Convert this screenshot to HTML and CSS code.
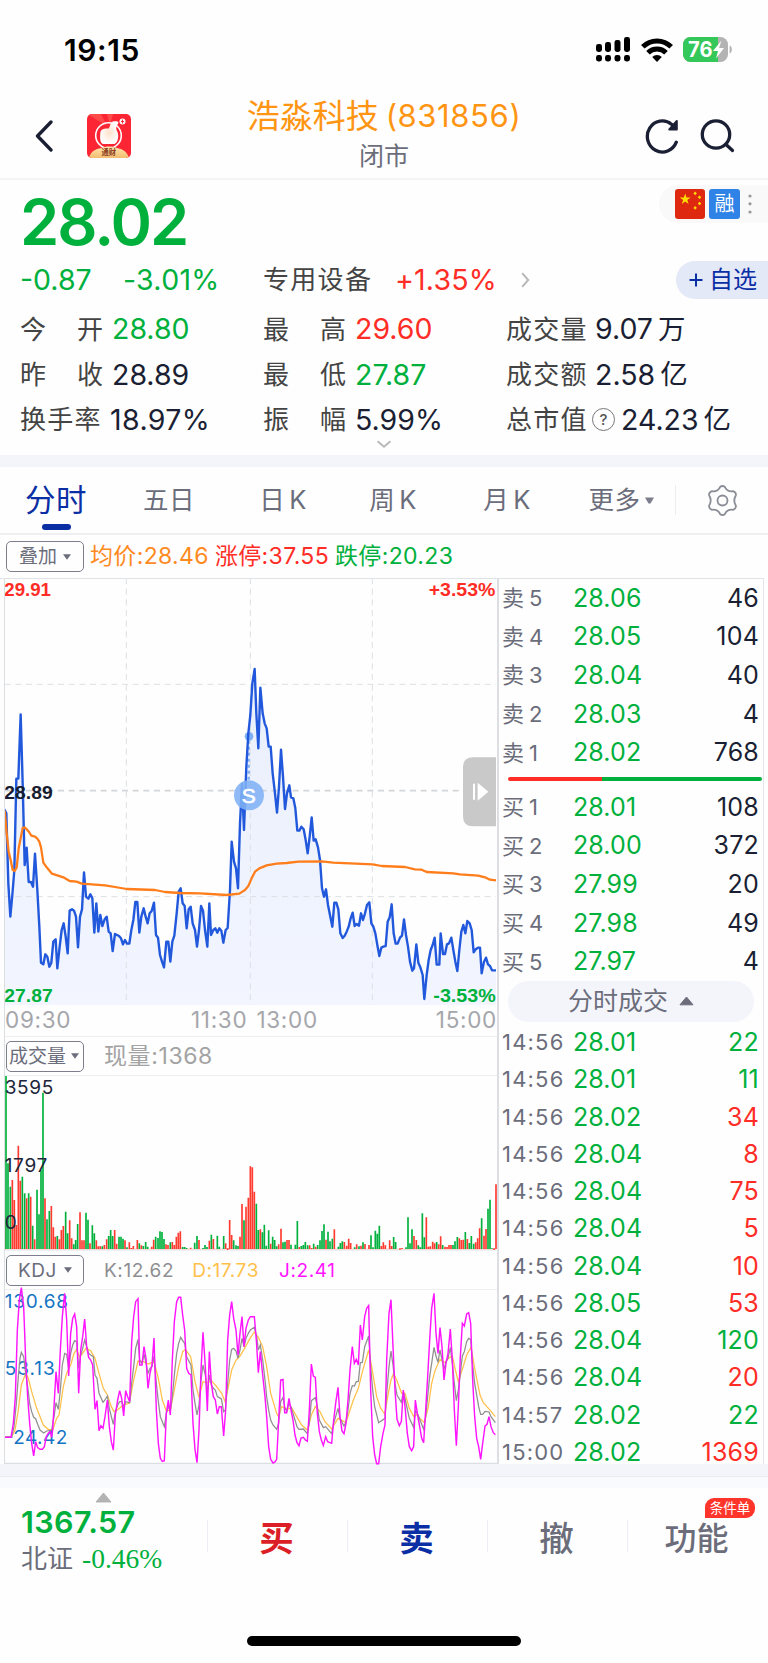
FILE: index.html
```html
<!DOCTYPE html>
<html lang="zh-CN">
<head>
<meta charset="utf-8">
<title>浩淼科技 (831856)</title>
<link rel="stylesheet" href="styles.css">
</head>
<body>
<div class="status">
  <span class="clock">19:15</span>
  <div class="status-icons">
    <svg width="34" height="25" viewBox="0 0 34 25"><g fill="#000"><rect x="0" y="7" width="6" height="8" rx="2.4"/><rect x="9" y="5" width="6" height="10" rx="2.4"/><rect x="18.500" y="3" width="6" height="12" rx="2.4"/><rect x="28" y="0" width="6" height="15" rx="2.4"/><rect x="0" y="18" width="6" height="6.500" rx="2.4"/><rect x="9" y="18" width="6" height="6.500" rx="2.4"/><rect x="18.500" y="18" width="6" height="6.500" rx="2.4"/><rect x="28" y="18" width="6" height="6.500" rx="2.4"/></g></svg>
    <svg class="wifi" width="32" height="24" viewBox="0 0 32 24"><g fill="none" stroke="#000" stroke-width="5"><path d="M1.800 8.800a20 20 0 0 1 28.400 0"/><path d="M7 14.800a12.700 12.700 0 0 1 18 0"/></g><path d="M16 24l-4.800-5a6.800 6.800 0 0 1 9.600 0z" fill="#000"/></svg>
    <svg width="50" height="26" viewBox="0 0 50 26"><defs><clipPath id="batt"><rect width="45" height="25" rx="7.500"/></clipPath></defs><g clip-path="url(#batt)"><rect width="45" height="25" fill="#b3b3b3"/><rect width="35" height="25" fill="#34c759"/></g><path d="M46.600 8.600c3 .8 3 7.200 0 8z" fill="#b3b3b3"/><text class="batt-text" x="5" y="20.200" textLength="24.500" lengthAdjust="spacingAndGlyphs">76</text><path d="M38.500 3.500l-8.500 10.500h5L33 21.500l8-10.500h-5z" fill="#fff"/></svg>
  </div>
</div>

<header class="header">
  <div class="head-left">
    <svg width="18" height="32" viewBox="0 0 18 32"><path d="M16 2L2.500 16 16 30" fill="none" stroke="#1a1f33" stroke-width="3.300" stroke-linecap="round" stroke-linejoin="round"/></svg>
    <svg class="app-icon" width="44" height="44" viewBox="0 0 44 44">
      <defs><clipPath id="app"><rect width="44" height="44" rx="5"/></clipPath><linearGradient id="gold" x2="0" y2="1"><stop stop-color="#ffe4ad"/><stop offset="1" stop-color="#f2bd70"/></linearGradient><radialGradient id="palm"><stop stop-color="#ffe2cc"/><stop offset="1" stop-color="#fff"/></radialGradient></defs>
      <g clip-path="url(#app)"><rect width="44" height="44" fill="#fb2534"/><path d="M0 0h14l6 12zM20 0h6l-3 12z" fill="#ff4a4a"/>
      <circle cx="21.500" cy="21.500" r="12.800" fill="none" stroke="#fff" stroke-width="1.600"/><path d="M13.500 17.500c1-2.500 4-3 8-3 2-1.500 1.500-6.500 5-7.200 5-.5 6 1 4 3.200-1.500 2-1.500 4-.8 6 2.500 3 2 12-2.200 13.500H16c-3.500-1-3-8-2.500-12.500z" fill="url(#palm)"/><circle cx="35.500" cy="7.500" r="3" fill="#fff"/><path d="M35.500 5.500v4m-1.500-2h3" stroke="#fb2534"/>
      <path d="M2 44c2-8 8-9 12-10 5-2 11-2 16 0 5 1 10 3 12 10z" fill="url(#gold)"/><text class="app-text" x="14.500" y="41" textLength="14.500" lengthAdjust="spacingAndGlyphs">通财</text></g>
    </svg>
  </div>
  <div class="titles">
    <div class="title"><span>浩淼科技</span><span class="code">(831856)</span></div>
    <div class="subtitle">闭市</div>
  </div>
  <div class="head-right">
    <svg width="36" height="36" viewBox="0 0 36 36"><g fill="none" stroke="#1a1f33" stroke-width="3.300" stroke-linecap="round" stroke-linejoin="round"><path d="M32.300 24.200A15 15.500 0 1 1 27.500 6.200l3.500 3.300"/><path d="M32.800 3v8.500h-7.500z" fill="#1a1f33" stroke-width="2"/></g></svg>
    <svg width="36" height="36" viewBox="0 0 36 36"><g fill="none" stroke="#1a1f33" stroke-width="3.300" stroke-linecap="round"><circle cx="17" cy="16.500" r="13.700"/><path d="M27 26.500l6.500 6"/></g></svg>
  </div>
</header>

<section class="quote">
  <div class="quote-top">
    <div class="last">28.02</div>
    <div class="tags">
      <svg width="30" height="30" viewBox="0 0 30 30"><rect width="30" height="30" rx="3" fill="#de2910"/><path d="M10.200 4.500l1.300 4h4.200l-3.400 2.400 1.300 4-3.400-2.500-3.400 2.500 1.300-4-3.400-2.400h4.200z" fill="#ffde00"/><g fill="#ffde00"><path d="M20 2.500l1.800 1.800-1.600 2-1.700-1.700z"/><path d="M24.300 6.500l2 1.500-1.500 2-2-1.500z"/><path d="M24.300 12.800l2 1.500-1.500 2-2-1.500z"/><path d="M20 17l1.800 1.800-1.600 2-1.700-1.700z"/></g></svg>
      <span class="tag-rong">融</span>
      <svg width="4" height="20" viewBox="0 0 4 20"><g fill="#999"><circle cx="2" cy="2" r="1.600"/><circle cx="2" cy="9.800" r="1.600"/><circle cx="2" cy="18" r="1.600"/></g></svg>
    </div>
  </div>
  <div class="quote-change">
    <span class="num down chg">-0.87</span><span class="num down pct">-3.01%</span>
    <span class="lab sector">专用设备</span><span class="num up sector-pct">+1.35%</span>
    <svg width="9" height="16" viewBox="0 0 9 16"><path d="M1.200 1.200L7.200 8l-6 6.800" fill="none" stroke="#b9b9b9" stroke-width="2"/></svg>
    <span class="fav"><svg width="14" height="14" viewBox="0 0 14 14"><path d="M7 .5v13M.5 7h13" stroke="#0a2ea4" stroke-width="2"/></svg>自选</span>
  </div>
  <div class="stats">
    <div><span class="lab just">今 开</span><span class="num down">28.80</span></div>
    <div><span class="lab just">最 高</span><span class="num up">29.60</span></div>
    <div><span class="lab three">成交量</span><span class="num">9.07</span><span class="unit">万</span></div>
    <div><span class="lab just">昨 收</span><span class="num">28.89</span></div>
    <div><span class="lab just">最 低</span><span class="num down">27.87</span></div>
    <div><span class="lab three">成交额</span><span class="num">2.58</span><span class="unit">亿</span></div>
    <div><span class="lab three">换手率</span><span class="num wide">18.97%</span></div>
    <div><span class="lab just">振 幅</span><span class="num">5.99%</span></div>
    <div><span class="lab three cap">总市值</span><span class="help">?</span><span class="num">24.23</span><span class="unit">亿</span></div>
  </div>
  <svg class="expand" width="16" height="9" viewBox="0 0 16 9"><path d="M1.500 1.200L8 6.800l6.500-5.600" fill="none" stroke="#b9b9b9" stroke-width="2"/></svg>
</section>
<div class="band"></div>

<nav class="tabs">
  <span class="tab active">分时</span><span class="tab">五日</span><span class="tab">日<i>K</i></span><span class="tab">周<i>K</i></span><span class="tab">月<i>K</i></span><span class="tab more">更多<svg width="9" height="7" viewBox="0 0 9 7"><path d="M0 .5h9L5.500 6.500h-2z" fill="#7c7e8c"/></svg></span>
  <span class="gear"><svg width="31" height="31" viewBox="0 0 31 31"><g fill="none" stroke="#8a8c96" stroke-width="1.800" stroke-linejoin="round"><path d="M13.200 1.800Q15.500 .2 17.800 1.800Q20.200 7 26 6.200Q29.200 7.200 28.900 10.200Q25.700 15.500 28.900 20.800Q29.200 23.800 26 24.800Q20.200 24 17.800 29.200Q15.500 30.800 13.200 29.200Q10.800 24 5 24.800Q1.800 23.800 2.100 20.800Q5.300 15.500 2.100 10.200Q1.800 7.200 5 6.200Q10.800 7 13.200 1.800z"/><circle cx="15.500" cy="15.500" r="5"/></g></svg></span>
</nav>

<div class="legend">
  <span class="pick">叠加<svg width="8" height="6" viewBox="0 0 8 6"><path d="M0 .3h8L4 5.700z" fill="#6b6d7b"/></svg></span>
  <span class="avg">均价:28.46</span><span class="limit-up">涨停:37.55</span><span class="limit-down">跌停:20.23</span>
</div>

<main class="board">
  <div class="charts">
    <svg class="price" width="493" height="426" viewBox="15 27 1479 1278">
      <defs>
        <linearGradient id="area" x2="0" y2="1"><stop stop-color="#e9effc"/><stop offset="1" stop-color="#f3f6ff"/></linearGradient>
        <clipPath id="plot"><rect x="13" y="24" width="1475" height="1281"/></clipPath>
        <path id="series" d="M0 1400V720L14 720 19 730 25 940 31 1040 37 975 43 900 49 626 55 626 62 433 68 640 74 885 80 833 86 936 93 936 99 950 105 851 112 960 118 1070 123 1178 130 1183 136 1153 142 1160 148 1190 154 1178 160 1115 167 1108 172 1195 179 1130 185 1080 191 1060 197 1100 203 1150 209 1022 216 1018 222 1022 228 1040 234 1132 240 1040 246 1018 252 907 258 980 265 986 271 973 277 985 283 1088 289 1000 295 1085 301 1035 307 1068 314 1048 320 1040 326 1085 332 1090 338 1143 345 1092 357 1098 363 1105 369 1123 375 1110 381 1121 388 1121 394 1080 400 1050 406 996 412 996 418 1088 424 1040 431 1015 437 1040 443 1060 449 1030 455 1023 462 998 468 1095 474 1103 480 1155 486 1175 492 1192 499 1115 505 1115 511 1175 517 1115 523 1097 530 1030 536 965 542 955 548 1000 554 1008 560 1075 566 1018 572 1010 578 1060 585 1080 591 1130 597 1080 603 1008 609 1022 615 1080 622 1130 628 1000 633 1095 640 1080 646 1075 652 1088 658 1075 664 1082 670 1118 677 1080 683 1074 690 960 695 815 702 875 708 895 714 955 720 760 726 642 732 780 739 590 745 490 751 435 757 340 764 297 769 430 775 535 781 353 788 430 794 460 800 475 806 530 812 530 818 610 825 670 831 728 837 650 843 539 849 620 855 717 861 670 868 646 873 682 880 685 886 715 892 782 898 782 904 770 911 778 917 810 923 850 929 800 935 742 941 812 947 808 954 832 960 870 966 955 972 980 978 958 984 1005 991 1040 997 1070 1003 998 1009 998 1015 1018 1021 1090 1028 1104 1034 1097 1040 1085 1046 1070 1052 1045 1058 1028 1064 1068 1070 1062 1077 1067 1083 1030 1089 1050 1095 1030 1101 1005 1108 997 1114 1060 1120 1070 1126 1090 1132 1125 1138 1158 1144 1133 1150 1130 1157 1128 1163 1055 1169 1042 1175 1003 1181 1090 1187 1121 1193 1121 1200 1103 1206 1097 1212 1048 1218 1095 1224 1130 1230 1175 1237 1202 1242 1195 1249 1123 1255 1178 1261 1192 1268 1215 1273 1287 1280 1215 1286 1170 1292 1140 1298 1125 1304 1103 1310 1184 1318 1184 1322 1090 1329 1152 1335 1152 1341 1123 1347 1120 1354 1103 1360 1140 1366 1175 1372 1203 1378 1140 1384 1085 1390 1065 1396 1090 1402 1053 1409 1060 1415 1080 1421 1147 1427 1138 1434 1133 1440 1133 1445 1210 1452 1175 1458 1163 1464 1183 1470 1188 1476 1201 1488 1201H1510V1400z"/>
      </defs>
      <use href="#series" fill="url(#area)" clip-path="url(#plot)"/>
      <g stroke="#dcdfe2" stroke-width="3" stroke-dasharray="18 14" fill="none"><path d="M379 24V1305M751 24V1305M1117 24V1305"/><path d="M14 343H1488M14 980H1488"/><path d="M14 662H1488" stroke="#d2d5da" stroke-width="5"/></g>
      <g fill="#7fb0f5"><circle cx="747" cy="499" r="13"/><path d="M746 512V632" stroke="#7fb0f5" stroke-width="7" stroke-dasharray="9 9"/></g>
      <use class="price-line" href="#series" clip-path="url(#plot)"/>
      <path class="avg-line" d="M14 722L20 790 26 845 32 870 38 900 44 903 50 892 56 835 62 805 68 774 74 772 80 778 87 786 94 797 105 800 112 806 118 815 123 832 130 878 140 892 156 911 190 922 209 933 230 935 245 941 315 946 345 951 380 957 465 960 495 966 540 969 600 970 680 975 718 971 735 960 745 948 755 925 765 905 778 895 800 886 830 881 860 879 895 875 965 874 1000 878 1050 880 1118 883 1145 888 1215 891 1245 898 1265 899 1280 906 1360 910 1380 913 1435 917 1455 922 1470 929 1488 931"/>
      <circle cx="747" cy="676" r="45" fill="#7fb0f5" fill-opacity=".88"/>
      <text class="mark" x="725" y="698" textLength="42" lengthAdjust="spacingAndGlyphs">S</text>
      <g class="axis-bold"><text x="13" y="79" fill="#ff2d26" textLength="140" lengthAdjust="spacingAndGlyphs">29.91</text><text x="1286" y="79" fill="#ff2d26" textLength="200" lengthAdjust="spacingAndGlyphs">+3.53%</text><text x="13" y="688" fill="#171c30" textLength="145" lengthAdjust="spacingAndGlyphs">28.89</text><text x="13" y="1296" fill="#00b03c" textLength="145" lengthAdjust="spacingAndGlyphs">27.87</text><text x="1300" y="1296" fill="#00b03c" textLength="187" lengthAdjust="spacingAndGlyphs">-3.53%</text></g>
      <path d="M1488 562H1419q-30 0-30 30V739q0 30 30 30H1488z" fill="#c9c9c9"/><path d="M1419 641h6v48h-6zM1433 638l32 27-32 27z" fill="#fff"/>
    </svg>
    <div class="times"><span>09:30</span><span class="mid">11:30</span><span class="mid2">13:00</span><span>15:00</span></div>
    <div class="bar vol-bar"><span class="pick">成交量<svg width="8" height="6" viewBox="0 0 8 6"><path d="M0 .3h8L4 5.700z" fill="#6b6d7b"/></svg></span><span class="now">现量:1368</span></div>
    <svg class="volume" width="493" height="174" viewBox="15 138 1479 522">
      <path d="M12 657.500H1488" stroke="#f7c9c7" stroke-width="3"/>
      <path class="vol-up" d="M14 657V555M37 657V450M43 657V510M49 657V585M55 657V347M61 657V452M80 657V505M92 657V500M104 657V628M135 657V505M154 657V528M160 657V592M166 657V620M178 657V628M184 657V600M190 657V588M209 657V571M215 657V625M240 657V547M246 657V631M252 657V631M270 657V640M289 657V631M295 657V649M301 657V649M313 657V645M320 657V628M344 657V600M350 657V641M375 657V631M388 657V637M394 657V654M400 657V648M412 657V630M424 657V646M455 657V650M461 657V629M498 657V643M504 657V645M517 657V636M523 657V645M529 657V620M535 657V608M541 657V604M572 657V653M597 657V630M628 657V632M640 657V627M677 657V640M683 660V655M689 657V570M695 657V615M720 657V620M726 657V522M738 657V530M745 657V503M751 657V409M757 657V412M763 657V485M781 657V598M812 657V641M836 657V643M843 657V596M861 657V630M867 657V630M898 657V651M929 657V646M935 657V654M947 657V650M978 657V629M1003 657V598M1033 657V636M1040 657V647M1046 657V626M1052 657V639M1070 657V643M1083 657V647M1095 657V642M1107 657V645M1144 657V648M1150 657V637M1156 657V646M1169 657V631M1175 657V648M1200 659V655M1206 657V654M1242 657V618M1249 657V630M1279 657V562M1285 657V650M1291 657V649M1298 657V635M1304 657V640M1316 657V643M1322 657V619M1335 657V650M1341 657V651M1347 657V645M1353 657V645M1378 657V625M1384 657V630M1390 657V629M1402 657V627M1427 657V637M1433 657V625M1439 657V595M1452 657V617M1458 657V597M1482 660V655M1488 657V463"/>
      <path class="vol-down" d="M18 657V138M24 657V400M31 657V470M67 657V440M74 657V490M86 657V490M98 657V587M111 657V479M117 657V553M123 657V420M129 657V188M141 657V568M148 657V543M172 657V618M197 657V545M203 657V610M221 657V643M227 657V630M233 657V582M258 657V548M264 657V569M277 657V586M283 657V610M307 657V649M326 657V618M332 657V600M338 657V618M357 657V620M363 657V620M369 657V626M381 657V652M418 657V640M430 657V648M437 657V636M443 657V650M467 657V620M474 657V624M480 657V604M486 657V606M492 657V627M511 657V637M548 657V651M554 657V651M560 657V654M584 657V638M591 657V618M609 657V654M615 657V645M621 657V651M634 657V614M652 657V617M658 657V650M671 657V618M701 657V631M708 657V646M714 657V648M732 657V571M769 657V521M775 657V600M787 657V607M793 657V584M799 657V647M806 657V601M818 657V620M824 657V630M830 657V649M849 657V637M855 657V635M873 657V644M886 657V644M892 657V573M904 657V648M910 657V645M916 657V636M923 657V646M941 657V641M953 657V645M960 657V631M966 657V603M972 657V583M984 657V605M990 657V634M997 657V626M1015 657V650M1021 657V639M1027 657V634M1064 657V652M1077 657V649M1089 657V637M1113 657V616M1119 657V652M1126 657V602M1132 657V611M1138 657V587M1181 657V621M1187 657V636M1218 657V652M1224 657V562M1230 657V640M1236 657V598M1255 657V646M1261 657V652M1267 657V550M1273 657V622M1310 657V636M1328 657V645M1359 657V645M1365 657V634M1372 657V621M1396 657V606M1408 657V639M1414 657V618M1421 657V641M1445 657V565M1464 657V536M1470 657V509M1476 657V655"/>
      <g class="axis" fill="#20253a"><text x="14" y="192" textLength="146">3595</text><text x="14" y="427" textLength="128">1797</text><text x="14" y="598">0</text></g>
    </svg>
    <div class="bar kdj-bar"><span class="pick kdj">KDJ<svg width="8" height="6" viewBox="0 0 8 6"><path d="M0 .3h8L4 5.700z" fill="#6b6d7b"/></svg></span><span class="k">K:12.62</span><span class="d">D:17.73</span><span class="j">J:2.41</span></div>
    <svg class="kdj-chart" width="493" height="174" viewBox="15 120 1479 522">
      <path d="M12 640H1494" stroke="#dcdfe2" stroke-width="4"/>
      <g class="axis" fill="#1575c5"><text x="14" y="174" textLength="190">130.68</text><text x="14" y="375" textLength="150">53.13</text><text x="14" y="582" textLength="188">-24.42</text></g>
      <path class="line-d" d="M15 562L35 560 45 540 55 480 64 405 77 370 85 385 95 425 110 475 130 525 145 538 158 540 170 505 177 495 190 410 200 370 212 345 222 310 230 298 238 320 246 312 258 295 272 302 285 325 297 370 310 415 322 435 334 470 342 485 355 478 370 465 388 460 400 395 414 333 430 335 444 342 462 335 475 385 487 450 499 483 511 480 523 420 536 350 548 305 556 298 572 320 585 395 597 442 609 395 622 398 634 392 650 410 665 430 675 455 683 420 695 360 708 330 720 318 732 298 750 265 763 246 775 262 788 290 800 350 812 430 830 490 836 500 845 470 860 478 875 473 890 500 905 525 922 540 934 495 946 470 960 485 975 515 995 537 1014 505 1038 518 1050 480 1060 450 1075 415 1088 362 1106 300 1115 350 1130 440 1142 475 1154 492 1165 430 1173 390 1181 370 1190 390 1205 430 1215 430 1228 475 1241 500 1250 494 1260 505 1273 518 1285 470 1295 400 1305 362 1320 328 1335 338 1345 325 1357 318 1365 355 1375 395 1388 355 1400 315 1413 292 1425 360 1440 435 1450 458 1468 478 1486 500"/>
      <path class="line-k" d="M15 562L35 560 42 530 49 460 55 380 60 325 64 307 71 320 77 370 83 410 89 460 95 485 101 502 107 506 113 523 120 540 131 549 140 543 155 540 162 500 168 458 175 478 181 420 187 345 194 310 200 313 206 355 212 310 218 285 224 272 230 275 236 355 242 315 248 295 254 270 260 290 266 310 272 315 280 320 285 375 291 385 297 430 309 457 315 450 322 438 328 475 334 500 340 523 346 485 353 465 359 455 365 455 371 470 377 455 389 458 395 400 401 350 407 295 414 268 419 330 426 340 432 312 438 340 444 370 450 355 456 350 462 318 469 400 475 455 481 500 487 515 493 530 499 490 505 470 511 482 517 440 523 375 530 310 536 280 542 262 548 272 554 280 560 320 566 332 573 345 579 420 585 460 591 495 597 465 603 390 609 345 616 375 622 430 628 375 634 405 640 415 646 420 652 440 658 443 664 447 671 485 676 480 683 400 689 330 695 298 701 295 708 303 714 325 720 300 726 265 732 290 738 265 745 250 751 240 763 232 770 260 775 300 781 285 788 330 795 390 800 440 806 480 812 510 819 525 830 538 836 520 842 455 849 443 854 470 860 485 867 460 873 470 879 490 885 510 891 530 897 538 910 537 922 551 928 520 934 452 946 443 952 470 958 510 970 533 977 530 995 551 1001 520 1007 500 1014 475 1020 505 1032 528 1038 515 1044 480 1050 430 1057 407 1063 408 1069 395 1075 394 1081 338 1087 337 1094 290 1106 258 1112 350 1118 420 1124 470 1136 518 1155 505 1160 430 1167 350 1173 303 1179 345 1185 400 1191 435 1204 457 1210 425 1216 450 1228 505 1241 532 1246 482 1252 490 1271 538 1277 500 1283 440 1289 380 1295 340 1302 292 1308 318 1314 337 1320 300 1332 358 1338 335 1344 325 1351 293 1357 340 1363 400 1369 452 1375 420 1381 370 1387 318 1393 305 1400 275 1406 265 1412 268 1418 345 1424 400 1436 470 1442 493 1448 493 1455 484 1467 486 1473 500 1486 518"/>
      <path class="line-j" d="M15 562L33 562 40 520 46 440 52 240 58 150 64 113 71 170 77 330 83 440 89 520 95 580 101 618 107 575 113 593 120 598 127 598 133 590 139 560 145 550 151 545 155 562 158 540 162 470 168 365 175 430 181 300 187 200 194 130 200 210 206 378 212 250 218 205 224 192 230 230 236 430 242 300 248 260 254 207 260 290 266 322 272 330 278 345 285 478 291 452 297 542 303 527 309 535 315 500 322 450 328 530 334 575 340 600 346 495 353 450 359 422 365 445 371 498 377 422 383 440 389 455 395 275 401 200 407 155 414 146 419 345 426 345 432 290 438 325 444 415 450 370 456 345 462 264 469 480 475 580 481 625 487 634 493 632 499 490 505 450 511 495 517 330 523 215 530 155 536 142 542 142 548 195 554 240 560 355 566 370 573 375 579 520 585 598 591 638 597 540 603 360 609 247 616 350 622 483 628 305 634 400 640 440 646 450 652 492 658 470 664 470 671 558 677 480 683 270 689 195 695 155 701 205 708 240 714 315 720 250 726 200 732 290 738 235 745 210 751 200 763 200 769 270 775 368 781 305 788 375 795 440 800 500 806 590 812 628 819 639 825 636 830 628 836 510 842 390 849 388 854 488 860 488 867 445 873 480 879 510 885 555 891 578 897 587 903 564 910 562 916 570 922 574 928 480 934 342 940 378 946 382 952 490 958 545 964 570 970 586 977 560 983 575 995 580 1001 510 1007 460 1014 412 1020 500 1026 543 1032 551 1038 520 1044 450 1050 360 1057 290 1063 340 1069 328 1075 345 1081 225 1087 270 1094 200 1100 175 1106 167 1112 420 1118 560 1124 615 1130 641 1136 641 1142 590 1149 550 1155 525 1160 330 1167 190 1173 149 1179 290 1185 420 1191 508 1198 527 1204 515 1210 420 1216 480 1222 550 1228 590 1235 602 1241 590 1246 450 1252 490 1259 530 1265 565 1271 578 1277 480 1283 380 1289 270 1295 175 1302 130 1308 250 1314 310 1320 233 1326 290 1332 390 1338 340 1344 310 1351 237 1357 330 1363 480 1369 587 1375 470 1381 320 1387 220 1393 228 1400 192 1406 188 1412 220 1418 390 1424 500 1430 565 1436 590 1442 628 1448 580 1455 528 1461 523 1467 500 1473 530 1480 548 1486 554"/>
    </svg>
  </div>
  <aside class="depth">
    <div class="levels">
      <div><b>卖<i>5</i></b><span>28.06</span><em>46</em></div>
      <div><b>卖<i>4</i></b><span>28.05</span><em>104</em></div>
      <div><b>卖<i>3</i></b><span>28.04</span><em>40</em></div>
      <div><b>卖<i>2</i></b><span>28.03</span><em>4</em></div>
      <div><b>卖<i>1</i></b><span>28.02</span><em>768</em></div>
    </div>
    <div class="ratio"></div>
    <div class="levels">
      <div><b>买<i>1</i></b><span>28.01</span><em>108</em></div>
      <div><b>买<i>2</i></b><span>28.00</span><em>372</em></div>
      <div><b>买<i>3</i></b><span>27.99</span><em>20</em></div>
      <div><b>买<i>4</i></b><span>27.98</span><em>49</em></div>
      <div><b>买<i>5</i></b><span>27.97</span><em>4</em></div>
    </div>
    <div class="ticks-head">分时成交<svg width="15" height="10" viewBox="0 0 15 10"><path d="M7.500 1L14 8.800H1z" fill="#6b6d7b" stroke="#6b6d7b" stroke-linejoin="round"/></svg></div>
    <div class="ticks">
      <div><b>14:56</b><span>28.01</span><em class="down">22</em></div>
      <div><b>14:56</b><span>28.01</span><em class="down">11</em></div>
      <div><b>14:56</b><span>28.02</span><em class="up">34</em></div>
      <div><b>14:56</b><span>28.04</span><em class="up">8</em></div>
      <div><b>14:56</b><span>28.04</span><em class="up">75</em></div>
      <div><b>14:56</b><span>28.04</span><em class="up">5</em></div>
      <div><b>14:56</b><span>28.04</span><em class="up">10</em></div>
      <div><b>14:56</b><span>28.05</span><em class="up">53</em></div>
      <div><b>14:56</b><span>28.04</span><em class="down">120</em></div>
      <div><b>14:56</b><span>28.04</span><em class="up">20</em></div>
      <div><b>14:57</b><span>28.02</span><em class="down">22</em></div>
      <div><b>15:00</b><span>28.02</span><em class="up">1369</em></div>
    </div>
  </aside>
</main>
<div class="band low"></div>

<footer class="footer">
  <div class="index">
    <svg width="17" height="11" viewBox="0 0 17 11"><path d="M8.500 1L16 10H1z" fill="#b3b3b3" stroke="#b3b3b3" stroke-linejoin="round"/></svg>
    <div class="index-val">1367.57</div>
    <div class="index-row">北证<span>-0.46%</span></div>
  </div>
  <div class="act buy">买</div><div class="act sell">卖</div><div class="act">撤</div>
  <div class="act func">功能<span class="badge">条件单</span></div>
</footer>
<div class="home"></div>
</body>
</html>
```
FILE: styles.css
```css
* { box-sizing: border-box; }
body { margin: 0; width: 768px; height: 1663px; overflow: hidden; background: #fefefe; color: #1a1f33; font-family: Inter, "Noto Sans CJK SC", sans-serif; font-size: 26px; line-height: 1; }
svg { display: block; flex: none; }
i, em, b { font-style: normal; font-weight: 400; }
span, .last, .title, .index-val { white-space: nowrap; }
.up { color: #ff2d26 !important; }
.down { color: #00b03c !important; }

.status { display: flex; justify-content: space-between; height: 98px; padding: 1px 35px 0 64px; align-items: center; }
.clock { font-size: 30px; font-weight: 600; color: #000; letter-spacing: .6px; }
.status-icons { display: flex; align-items: center; }
.wifi { margin: 0 10px 0 11px; }
.batt-text { font: 700 21px Inter, sans-serif; fill: #fff; }

.header { display: grid; grid-template-columns: 228px 1fr 228px; height: 82px; border-bottom: 2px solid #f4f4f6; }
.head-left { display: flex; align-items: center; padding: 0 0 4px 35px; gap: 34px; height: 80px; }
.app-text { font: 700 8px "Noto Sans CJK SC", sans-serif; fill: #8a3c1c; }
.titles { text-align: center; }
.title { display: flex; justify-content: center; gap: 7px; color: #ff9513; font-size: 33px; line-height: 36px; }
.code { font-size: 31px; letter-spacing: .6px; }
.subtitle { margin-top: 5px; font-size: 25px; line-height: 35px; color: #6b6d7b; }
.head-right { display: flex; justify-content: flex-end; align-items: center; gap: 19px; padding: 0 33px 4px 0; height: 80px; }

.quote { position: relative; height: 275px; padding-left: 20px; }
.quote-top { display: flex; justify-content: space-between; height: 77px; padding-top: 5px; }
.last { font-size: 63px; font-weight: 600; color: #00b03c; line-height: 75px; letter-spacing: -2px; }
.tags { display: flex; align-items: center; gap: 4px; width: 109px; height: 38px; padding-left: 16px; border-radius: 19px 0 0 19px; background: #f9f9f9; }
.tag-rong { width: 31px; height: 30px; margin-right: 4px; border-radius: 3px; background: #2f83e6; color: #fff; font-size: 20px; line-height: 31px; text-align: center; }
.quote-change { display: flex; align-items: center; height: 46px; }
.num { font-size: 28.500px; letter-spacing: 0; }
.wide { padding-left: 1px; letter-spacing: .4px; }
.lab { font-size: 26px; color: #444; }
.chg { width: 103px; }
.pct { width: 140px; letter-spacing: .3px; }
.sector { width: 132px; letter-spacing: 1.300px; }
.sector-pct { width: 126px; letter-spacing: .2px; }
.fav { display: flex; align-items: center; gap: 6px; width: 92px; height: 38px; margin-left: auto; padding-left: 13px; border-radius: 19px 0 0 19px; background: #e4e9f7; color: #0a2ea4; font-size: 24px; }
.stats { display: grid; grid-template-columns: 243px 242px 1fr; grid-auto-rows: 45.200px; margin-top: 4px; }
.stats > div { display: flex; align-items: center; }
.just { width: 83px; margin-right: 9px; text-align: justify; text-align-last: justify; }
.three { width: 89px; letter-spacing: 1.300px; }
.stats > div:nth-child(3n) { padding-left: 1px; }
.cap { width: 86px; }
.unit { margin-left: 5px; font-size: 27.500px; }
.help { display: grid; place-items: center; width: 23px; height: 23px; margin-right: 6px; border: 1.500px solid #777; border-radius: 50%; font-size: 15px; font-weight: 500; color: #555; }
.expand { position: absolute; left: 376px; bottom: 6px; }
.band { height: 12px; background: #f4f5fa; }

.tabs { display: grid; grid-template-columns: 112px 114px 114px 106px 122px 107px 1fr; height: 68px; border-bottom: 2px solid #efeff1; color: #6b6d7b; align-items: center; }
.tab { position: relative; display: flex; align-items: center; justify-content: center; height: 66px; font-size: 25.500px; letter-spacing: .4px; }
.tab i { margin-left: 4px; }
.active { color: #0a2ea4; font-size: 30.500px; }
.active::after { content: ""; position: absolute; left: 42px; bottom: 3px; width: 29px; height: 6px; border-radius: 3px; background: #0a2ea4; }
.more svg { margin-left: 5px; }
.gear { display: grid; place-items: center end; height: 30px; padding-right: 30px; border-left: 1px solid #eee; }

.legend { display: flex; align-items: center; height: 43px; padding: 0 0 0 6px; font-size: 23px; gap: 6px; letter-spacing: .35px; }
.pick { display: flex; align-items: center; justify-content: center; gap: 6px; width: 78px; height: 31px; border: 1.500px solid #7c7e8c; border-radius: 5px; font-size: 19px; letter-spacing: 0; color: #6b6d7b; }
.avg { color: #ff8a1f; }
.limit-up { color: #ff2d26; }
.limit-down { color: #00b03c; }

.board { display: flex; height: 886px; margin-right: 4px; border-right: 1px solid #e4e5ea; border-top: 1px solid #e0e3e6; }
.charts { width: 495px; margin-left: 4px; border-left: 1px solid #dcdfe2; border-right: 2px solid #dcdee3; }
.price-line { fill: none; stroke: #2259dc; stroke-width: 7.200; stroke-linejoin: round; }
.avg-line { fill: none; stroke: #ff7d1a; stroke-width: 6.800; stroke-linejoin: round; }
.mark { font: 60px "Liberation Sans", sans-serif; fill: #fff; stroke: #fff; stroke-width: 2; }
.axis-bold { font: 700 56px "Liberation Sans", sans-serif; }
.axis { font: 57px Inter, sans-serif; }
.times { display: flex; height: 31px; align-items: center; font-size: 22.500px; color: #a5a6ab; letter-spacing: .7px; }
.times .mid { margin-left: auto; }
.times .mid2 { margin: 0 118px 0 9px; }
.bar { display: flex; align-items: center; height: 40px; padding-left: 1px; border: solid #eeeff1; border-width: 1.500px 0; }
.vol-bar .pick { gap: 5px; padding-right: 2px; }
.now { margin-left: 20px; font-size: 23px; color: #a3a3a3; letter-spacing: .6px; }
.kdj-chart { overflow: visible; }
.vol-up, .vol-down { fill: none; stroke: #ff3b30; stroke-width: 5; }
.vol-down { stroke: #00b03c; }
.pick.kdj { gap: 7px; letter-spacing: .6px; }
.k, .d, .j { font-size: 19px; letter-spacing: .6px; }
.k { margin-left: 20px; color: #8e8e93; }
.d { margin-left: 18px; color: #ffc04a; }
.j { margin-left: 20px; color: #ff14ff; }
.line-d, .line-k, .line-j { fill: none; stroke: #ffc04a; stroke-width: 3.800; }
.line-k { stroke: #909090; }
.line-j { stroke: #ff14ff; stroke-width: 4.300; }

.depth { flex: 1; padding-right: 4px; }
.levels > div, .ticks > div { display: grid; grid-template-columns: 71px 1fr auto; align-items: center; height: 38.600px; padding-left: 3px; }
.levels b { display: flex; align-items: center; gap: 5px; color: #6b6d7b; font-size: 22px; }
.levels i { font-size: 22px; }
.levels span, .ticks span { color: #00b03c; font-size: 25px; letter-spacing: .1px; }
.levels em, .ticks em { font-size: 25px; letter-spacing: .2px; }
.ratio { height: 4px; margin: 5px -3px 7px 9px; border-radius: 2px; background: linear-gradient(90deg, #ff2d26 37%, #00b03c 37%); }
.ticks-head { display: flex; align-items: center; justify-content: center; gap: 11px; height: 41px; width: 246px; margin: 0 0 2px 9px; border-radius: 21px; background: #f4f5fa; color: #6b6d7b; font-size: 25px; }
.ticks > div { height: 37.250px; }
.ticks b { color: #6b6d7b; font-size: 22px; letter-spacing: 1.200px; padding-bottom: 1px; }
.low { height: 13px; border-bottom: 1px solid #ebecef; }

.footer { display: grid; grid-template-columns: 207px repeat(4, 140px); height: 120px; background: linear-gradient(#f9fafd 11px, #fefefe 11px); }
.index { padding: 15px 0 0 21px; }
.index svg { margin-left: 74px; }
.index-val { margin-top: 4px; font-size: 30.500px; line-height: 30px; font-weight: 600; color: #00b03c; letter-spacing: .4px; }
.index-row { display: flex; align-items: center; margin-top: 6px; gap: 9px; font-size: 26px; line-height: 32px; color: #6b6d7b; }
.index-row span { font-family: "Liberation Serif", serif; font-size: 27.500px; color: #00b03c; }
.act { position: relative; height: 32px; margin-top: 43px; padding-right: 2px; border-left: 1px solid #eeeef4; font-size: 34.500px; line-height: 38px; font-weight: 500; text-align: center; color: #6b6d7b; }
.buy { color: #dc1f26; font-weight: 700; }
.sell { color: #0a2ea4; font-weight: 700; }
.func { font-size: 32px; }
.badge { position: absolute; left: 77px; top: -22px; width: 50px; height: 20px; border-radius: 9px 9px 9px 0; background: #ff352b; color: #fff; font-size: 13.500px; font-weight: 400; line-height: 20px; text-align: center; }
.home { width: 274px; height: 10px; margin: 39px auto 0 247px; border-radius: 5px; background: #000; }
```
